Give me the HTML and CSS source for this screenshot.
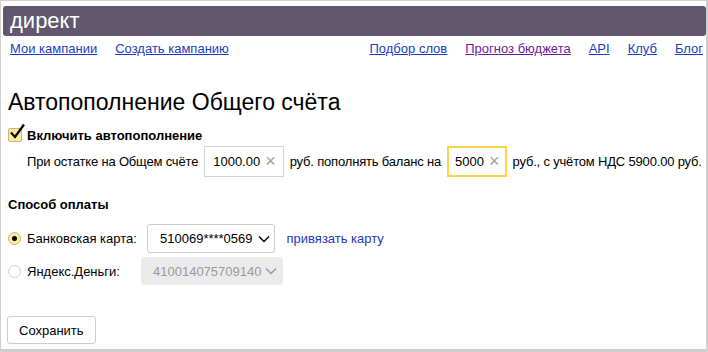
FILE: index.html
```html
<!DOCTYPE html>
<html lang="ru">
<head>
    <meta charset="UTF-8">
    <title>Автопополнение Общего счёта</title>
    <link rel="stylesheet" href="styles.css">
</head>
<body>
    <div class="frame">
        <div class="header">директ</div>
        <div class="nav">
            <div class="nav-left">
                <a href="#">Мои кампании</a>
                <a href="#">Создать кампанию</a>
            </div>
            <div class="nav-right">
                <a href="#">Подбор слов</a>
                <a href="#" class="visited">Прогноз бюджета</a>
                <a href="#">API</a>
                <a href="#">Клуб</a>
                <a href="#">Блог</a>
            </div>
        </div>

        <div class="content">
            <h1>Автопополнение Общего счёта</h1>

            <label class="check-row">
                <span class="checkbox">
                    <svg width="18" height="18" viewBox="0 0 18 18"><path d="M3 9.5 L7 14 L16 1.5" fill="none" stroke="#000" stroke-width="2.2"/></svg>
                </span>
                <b>Включить автопополнение</b>
            </label>

            <div class="sum-row">
                <span class="txt">При остатке на Общем счёте</span>
                <span class="input">1000.00 <i class="clear">×</i></span>
                <span class="txt">руб. пополнять баланс на</span>
                <span class="input focused">5000 <i class="clear">×</i></span>
                <span class="txt">руб., с учётом НДС 5900.00 руб.</span>
            </div>

            <h2>Способ оплаты</h2>

            <div class="pay-row first">
                <span class="radio checked"></span>
                <span class="pay-label">Банковская карта:</span>
                <span class="select">510069****0569
                    <svg width="12" height="8" viewBox="0 0 12 8"><path d="M1 1.5 L6 6.5 L11 1.5" fill="none" stroke="#000" stroke-width="1.4"/></svg>
                </span>
                <a href="#" class="bind">привязать карту</a>
            </div>

            <div class="pay-row second">
                <span class="radio"></span>
                <span class="pay-label short">Яндекс.Деньги:</span>
                <span class="select disabled">410014075709140
                    <svg width="12" height="8" viewBox="0 0 12 8"><path d="M1 1.5 L6 6.5 L11 1.5" fill="none" stroke="#999" stroke-width="1.4"/></svg>
                </span>
            </div>

            <button class="save">Сохранить</button>
        </div>
    </div>
</body>
</html>
```

FILE: styles.css
```css
body {
    margin: 0;
    font-family: "Liberation Sans", Arial, sans-serif;
    font-size: 13px;
    color: #000;
}
.frame {
    box-sizing: border-box;
    width: 708px;
    height: 352px;
    border-top: 1px solid #d0d0d0;
    border-left: 1px solid #d0d0d0;
    border-right: 2px solid #d0d0d0;
    border-bottom: 3px solid #cfcfcf;
    padding: 5px 0 0 2px;
}
.header {
    height: 30px;
    background-color: #61586f;
    border-radius: 3px;
    color: #fff;
    font-size: 22px;
    line-height: 29px;
    padding-left: 7px;
}
.nav {
    display: flex;
    justify-content: space-between;
    padding: 5px 3px 0 7px;
    line-height: 15px;
    white-space: nowrap;
}
.nav-left, .nav-right {
    display: flex;
    gap: 18px;
}
.nav a {
    color: #1a3dc1;
    text-decoration: underline;
}
.nav a.visited {
    color: #6b1a9b;
}
.content {
    padding-left: 5px;
}
h1 {
    font-size: 23px;
    font-weight: normal;
    margin: 33px 0 0 0;
    line-height: 26px;
}
.check-row {
    display: flex;
    align-items: center;
    margin-top: 12px;
    height: 16px;
}
.checkbox {
    position: relative;
    box-sizing: border-box;
    width: 14px;
    height: 14px;
    background-color: #fdeba4;
    border: 1px solid #c9b56d;
    border-radius: 2px;
    margin-right: 5px;
}
.checkbox svg {
    position: absolute;
    left: -1px;
    top: -6px;
}
.sum-row {
    display: flex;
    align-items: center;
    gap: 6px;
    margin: 3px 0 0 19px;
    white-space: nowrap;
}
.sum-row .txt {
    letter-spacing: -0.18px;
}
.input {
    box-sizing: border-box;
    height: 31px;
    border: 1px solid #d3d3d3;
    padding: 0 7px 0 8px;
    display: flex;
    align-items: center;
}
.input.focused {
    border: 2px solid #fcd54b;
    padding: 0 5px 0 6px;
}
.clear {
    font-style: normal;
    color: #a0a0a0;
    font-size: 18px;
    margin-left: 5px;
    font-weight: 300;
}
h2 {
    font-size: 13px;
    font-weight: bold;
    margin: 20px 0 0 0;
    line-height: 15px;
}
.pay-row {
    display: flex;
    align-items: center;
    white-space: nowrap;
}
.pay-row.first {
    margin-top: 12px;
}
.pay-row.second {
    margin-top: 4px;
}
.radio {
    box-sizing: border-box;
    width: 13px;
    height: 13px;
    border: 1px solid #d0d0d0;
    border-radius: 50%;
    margin-right: 6px;
    display: flex;
    align-items: center;
    justify-content: center;
}
.radio.checked {
    background-color: #fdeba4;
    border-color: #c9b56d;
}
.radio.checked::after {
    content: "";
    width: 5px;
    height: 5px;
    border-radius: 50%;
    background-color: #000;
}
.pay-label {
    width: 120px;
}
.pay-label.short {
    width: 114px;
}
.select {
    box-sizing: border-box;
    height: 29px;
    border: 1px solid #ccc;
    border-radius: 3px;
    display: flex;
    align-items: center;
    gap: 5px;
    padding: 0 4px 0 12px;
}
.select.disabled {
    height: 28px;
    border-color: #ebebeb;
    background-color: #ebebeb;
    color: #999;
    gap: 4px;
    padding: 0 5px 0 11px;
}
.bind {
    margin-left: 12px;
    color: #2238b8;
    text-decoration: none;
}
.save {
    display: block;
    margin: 31px 0 0 -1px;
    box-sizing: border-box;
    height: 28px;
    padding: 0 11px;
    background: #fff;
    border: 1px solid #ccc;
    border-radius: 3px;
    font-family: "Liberation Sans", Arial, sans-serif;
    font-size: 13px;
    color: #000;
}
```
